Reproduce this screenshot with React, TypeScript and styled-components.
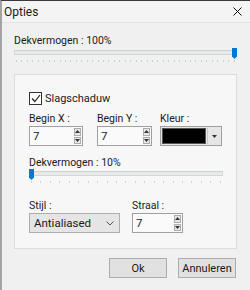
import React from 'react'
import styled, { createGlobalStyle } from 'styled-components'

const GlobalStyle = createGlobalStyle`
  html, body {
    margin: 0;
    padding: 0;
    background: #f0f0f0;
  }
  body {
    font-family: Roboto, 'Noto Sans', sans-serif;
  }
`

const Window = styled.div`
  width: 250px;
  height: 290px;
  box-sizing: border-box;
  border-top: 1px solid #3a3a3a;
  border-left: 2px solid #a4a4a4;
  background: #f0f0f0;
  display: flex;
  flex-direction: column;
  font-size: 10.5px;
  color: #1a1a1a;
`

const TitleBar = styled.div`
  height: 21px;
  display: flex;
  align-items: center;
  justify-content: space-between;
  padding: 0 8px 0 2px;
  background: #f4f4f4;
  border-bottom: 1px solid #e2e2e2;
  font-size: 12px;
`

const Body = styled.div`
  padding: 0 13px 0 12px;
  display: flex;
  flex-direction: column;
`

const Label = styled.div<{ $top?: number }>`
  line-height: 12px;
  height: 12px;
  margin-top: ${p => p.$top ?? 0}px;
  white-space: nowrap;
`

const SliderBox = styled.div<{ $top?: number }>`
  position: relative;
  height: 15px;
  margin-top: ${p => p.$top ?? 0}px;
`

const Track = styled.div`
  position: absolute;
  left: 0;
  right: 0;
  top: 2px;
  height: 3px;
  background: #e7eaea;
  border: 1px solid #d6d6d6;
  border-top-color: #cfcfcf;
`

const Thumb = styled.div`
  position: absolute;
  top: 0;
  width: 5px;
  height: 11px;
  background: #0078d7;
  clip-path: polygon(0 0, 100% 0, 100% 75%, 50% 100%, 0 75%);
`

const Ticks = styled.div`
  position: absolute;
  left: 2px;
  right: 2px;
  top: 12px;
  height: 3px;
  display: flex;
  justify-content: space-between;
`

const Tick = styled.span`
  width: 1px;
  height: 2px;
  background: #cdcdcd;
`

const Slider = ({ value, ticks, top }: { value: number; ticks: number; top: number }) => (
  <SliderBox $top={top}>
    <Track />
    <Thumb style={{ left: `calc(${value}% - ${value * 0.05}px)` }} />
    <Ticks>
      {Array.from({ length: ticks }).map((_, i) => (
        <Tick key={i} />
      ))}
    </Ticks>
  </SliderBox>
)

const GroupBox = styled.div`
  margin-top: 11px;
  height: 175px;
  box-sizing: border-box;
  border: 1px solid #dcdcdc;
  background: #f7f7f7;
  padding: 17px 13px 0 14px;
  display: flex;
  flex-direction: column;
`

const CheckRow = styled.label`
  display: flex;
  align-items: center;
  gap: 3px;
  height: 13px;
  font-size: 11px;
`

const CheckBox = styled.span`
  width: 13px;
  height: 13px;
  box-sizing: border-box;
  border: 1px solid #333;
  background: #fff;
  display: flex;
  align-items: center;
  justify-content: center;
`

const FieldRow = styled.div<{ $cols: string; $top: number }>`
  display: grid;
  grid-template-columns: ${p => p.$cols};
  margin-top: ${p => p.$top}px;
`

const Field = styled.div`
  display: flex;
  flex-direction: column;
  gap: 1px;
`

const SpinBox = styled.div<{ $w: number }>`
  width: ${p => p.$w}px;
  height: 20px;
  box-sizing: border-box;
  border: 1px solid #a0a0a0;
  background: #fafafa;
  display: flex;
  align-items: center;
  padding-left: 3px;
  font-size: 11.5px;
`

const SpinValue = styled.span`
  flex: 1;
`

const SpinButtons = styled.div`
  width: 7px;
  height: 16px;
  margin-right: 1px;
  display: flex;
  flex-direction: column;
  gap: 1px;
`

const SpinButton = styled.div`
  flex: 1;
  border: 1px solid #adadad;
  background: #e6e6e6;
  display: flex;
  align-items: center;
  justify-content: center;
`

const Spin = ({ value, width }: { value: string; width: number }) => (
  <SpinBox $w={width}>
    <SpinValue>{value}</SpinValue>
    <SpinButtons>
      <SpinButton>
        <svg width="5" height="3" viewBox="0 0 5 3">
          <path d="M0 3 L2.5 0 L5 3Z" fill="#333" />
        </svg>
      </SpinButton>
      <SpinButton>
        <svg width="5" height="3" viewBox="0 0 5 3">
          <path d="M0 0 L2.5 3 L5 0Z" fill="#333" />
        </svg>
      </SpinButton>
    </SpinButtons>
  </SpinBox>
)

const ColorPick = styled.div`
  width: 62px;
  height: 20px;
  box-sizing: border-box;
  border: 1px solid #a0a0a0;
  background: #e6e6e6;
  display: flex;
  padding: 1px;
  gap: 1px;
`

const Swatch = styled.div<{ $color: string }>`
  flex: 1;
  background: ${p => p.$color};
  border: 1px solid #555;
`

const ColorArrow = styled.div`
  width: 12px;
  display: flex;
  align-items: center;
  justify-content: center;
  border-left: 1px solid #c8c8c8;
`

const Select = styled.div`
  width: 91px;
  height: 20px;
  box-sizing: border-box;
  border: 1px solid #adadad;
  background: #e5e5e5;
  display: flex;
  align-items: center;
  justify-content: space-between;
  padding: 0 5px 0 4px;
  font-size: 11.5px;
`

const ButtonRow = styled.div`
  display: flex;
  justify-content: flex-end;
  gap: 11px;
  margin-top: 9px;
  padding-right: 1px;
`

const Button = styled.button`
  width: 58px;
  height: 20px;
  box-sizing: border-box;
  border: 1px solid #adadad;
  background: #e1e1e1;
  font-family: inherit;
  font-size: 11px;
  color: #1a1a1a;
  padding: 0;
`

export default function App() {
  return (
    <>
      <GlobalStyle />
      <Window>
        <TitleBar>
          <span>Opties</span>
          <svg width="9" height="9" viewBox="0 0 9 9">
            <path d="M0.5 0.5 L8.5 8.5 M8.5 0.5 L0.5 8.5" stroke="#111" strokeWidth="1" />
          </svg>
        </TitleBar>
        <Body>
          <Label $top={12}>Dekvermogen : 100%</Label>
          <Slider value={100} ticks={41} top={1} />
          <GroupBox>
            <CheckRow>
              <CheckBox>
                <svg width="10" height="9" viewBox="0 0 10 9">
                  <path d="M1 4.5 L3.8 7.5 L9 1" stroke="#222" strokeWidth="1.2" fill="none" />
                </svg>
              </CheckBox>
              Slagschaduw
            </CheckRow>
            <FieldRow $cols="68px 63px 62px" $top={8}>
              <Field>
                <Label>Begin X :</Label>
                <Spin value="7" width={54} />
              </Field>
              <Field>
                <Label>Begin Y :</Label>
                <Spin value="7" width={55} />
              </Field>
              <Field>
                <Label>Kleur :</Label>
                <ColorPick>
                  <Swatch $color="#000" />
                  <ColorArrow>
                    <svg width="5" height="3" viewBox="0 0 5 3">
                      <path d="M0 0 L2.5 3 L5 0Z" fill="#333" />
                    </svg>
                  </ColorArrow>
                </ColorPick>
              </Field>
            </FieldRow>
            <Label $top={11}>Dekvermogen : 10%</Label>
            <Slider value={0} ticks={21} top={0} />
            <FieldRow $cols="103px 51px" $top={16}>
              <Field>
                <Label>Stijl :</Label>
                <Select>
                  <span>Antialiased</span>
                  <svg width="8" height="5" viewBox="0 0 8 5">
                    <path d="M0.5 0.5 L4 4 L7.5 0.5" stroke="#555" strokeWidth="1" fill="none" />
                  </svg>
                </Select>
              </Field>
              <Field>
                <Label>Straal :</Label>
                <Spin value="7" width={51} />
              </Field>
            </FieldRow>
          </GroupBox>
          <ButtonRow>
            <Button>Ok</Button>
            <Button>Annuleren</Button>
          </ButtonRow>
        </Body>
      </Window>
    </>
  )
}
